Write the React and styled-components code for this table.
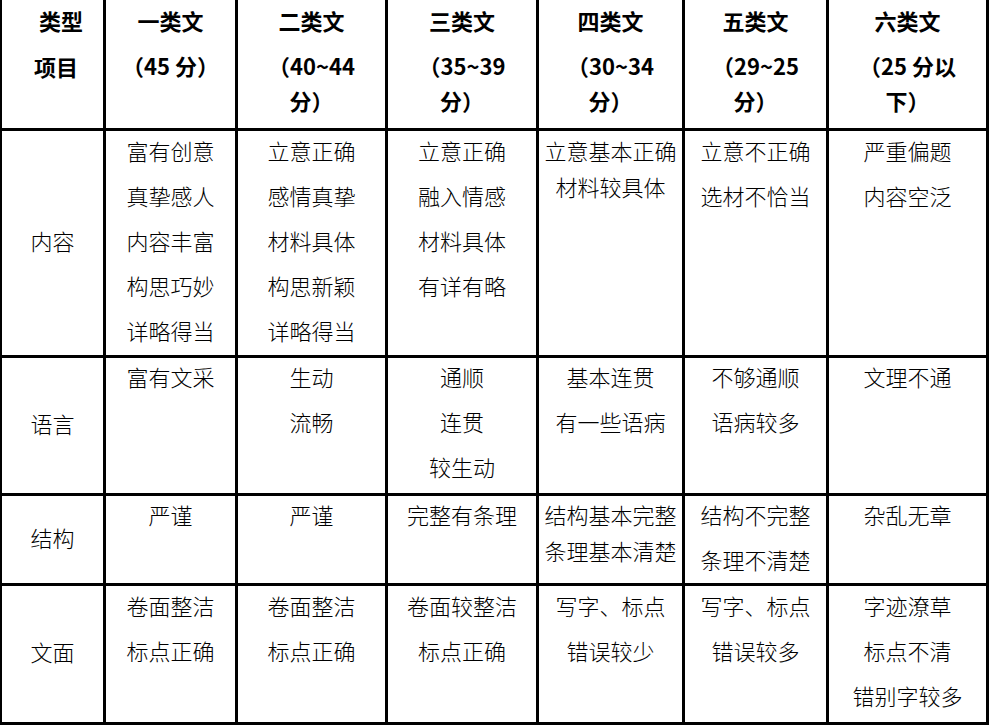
import React from "react";
import styled, { createGlobalStyle } from "styled-components";

const Global = createGlobalStyle`
  html, body { margin: 0; padding: 0; background: #fff; }
  body { font-family: "Noto Sans CJK SC", "Noto Sans", sans-serif; color: #000; }
`;

const Table = styled.div`
  display: grid;
  grid-template-columns: 101px 129px 147px 148px 143px 141px 157px;
  grid-template-rows: 128px 224px 135px 87px 136px;
  gap: 3px;
  background: #000;
  padding: 0 3px 3px 2px;
  width: 989px;
  height: 725px;
  box-sizing: border-box;
`;

const HeadCell = styled.div`
  background: #fff;
  display: flex;
  flex-direction: column;
  align-items: center;
  padding-top: 9px;
  font-weight: 700;
  font-size: 22px;
  line-height: 22px;
`;

const CornerCell = styled(HeadCell)`
  align-items: flex-start;
  gap: 24px;
`;

const CornerLabel = styled.div`
  padding-left: ${(p) => p.$indent}px;
`;

const Title = styled.div`
  white-space: nowrap;
`;

const Score = styled.div`
  margin-top: 23px;
  display: flex;
  flex-direction: column;
  align-items: center;
  gap: 13px;
  white-space: nowrap;
`;

const LabelCell = styled.div`
  background: #fff;
  display: flex;
  align-items: center;
  justify-content: center;
  padding-bottom: 6px;
  font-size: 22px;
  line-height: 22px;
  font-weight: 300;
`;

const Cell = styled.div`
  background: #fff;
  display: flex;
  flex-direction: column;
  align-items: center;
  gap: ${(p) => p.$gap}px;
  padding-top: ${(p) => p.$pad}px;
  font-size: 22px;
  line-height: 22px;
  font-weight: 300;
`;

const Line = styled.div`
  white-space: nowrap;
`;

const headers = [
  { title: "一类文", score: ["（45 分）"] },
  { title: "二类文", score: ["（40~44", "分）"] },
  { title: "三类文", score: ["（35~39", "分）"] },
  { title: "四类文", score: ["（30~34", "分）"] },
  { title: "五类文", score: ["（29~25", "分）"] },
  { title: "六类文", score: ["（25 分以", "下）"] },
];

const rows = [
  {
    label: "内容",
    pad: 8,
    cells: [
      { lines: ["富有创意", "真挚感人", "内容丰富", "构思巧妙", "详略得当"] },
      { lines: ["立意正确", "感情真挚", "材料具体", "构思新颖", "详略得当"] },
      { lines: ["立意正确", "融入情感", "材料具体", "有详有略"] },
      { lines: ["立意基本正确", "材料较具体"], tight: true },
      { lines: ["立意不正确", "选材不恰当"] },
      { lines: ["严重偏题", "内容空泛"] },
    ],
  },
  {
    label: "语言",
    pad: 7,
    cells: [
      { lines: ["富有文采"] },
      { lines: ["生动", "流畅"] },
      { lines: ["通顺", "连贯", "较生动"] },
      { lines: ["基本连贯", "有一些语病"] },
      { lines: ["不够通顺", "语病较多"] },
      { lines: ["文理不通"] },
    ],
  },
  {
    label: "结构",
    pad: 7,
    cells: [
      { lines: ["严谨"] },
      { lines: ["严谨"] },
      { lines: ["完整有条理"] },
      { lines: ["结构基本完整", "条理基本清楚"], tight: true },
      { lines: ["结构不完整", "条理不清楚"] },
      { lines: ["杂乱无章"] },
    ],
  },
  {
    label: "文面",
    pad: 8,
    cells: [
      { lines: ["卷面整洁", "标点正确"] },
      { lines: ["卷面整洁", "标点正确"] },
      { lines: ["卷面较整洁", "标点正确"] },
      { lines: ["写字、标点", "错误较少"] },
      { lines: ["写字、标点", "错误较多"] },
      { lines: ["字迹潦草", "标点不清", "错别字较多"] },
    ],
  },
];

export default function App() {
  return (
    <>
      <Global />
      <Table>
        <CornerCell>
          <CornerLabel $indent={37}>类型</CornerLabel>
          <CornerLabel $indent={32}>项目</CornerLabel>
        </CornerCell>
        {headers.map((h) => (
          <HeadCell key={h.title}>
            <Title>{h.title}</Title>
            <Score>
              {h.score.map((s) => (
                <Line key={s}>{s}</Line>
              ))}
            </Score>
          </HeadCell>
        ))}
        {rows.map((r) => (
          <React.Fragment key={r.label}>
            <LabelCell>{r.label}</LabelCell>
            {r.cells.map((c, i) => (
              <Cell key={i} $pad={r.pad} $gap={c.tight ? 14 : 23}>
                {c.lines.map((l, j) => (
                  <Line key={j}>{l}</Line>
                ))}
              </Cell>
            ))}
          </React.Fragment>
        ))}
      </Table>
    </>
  );
}
